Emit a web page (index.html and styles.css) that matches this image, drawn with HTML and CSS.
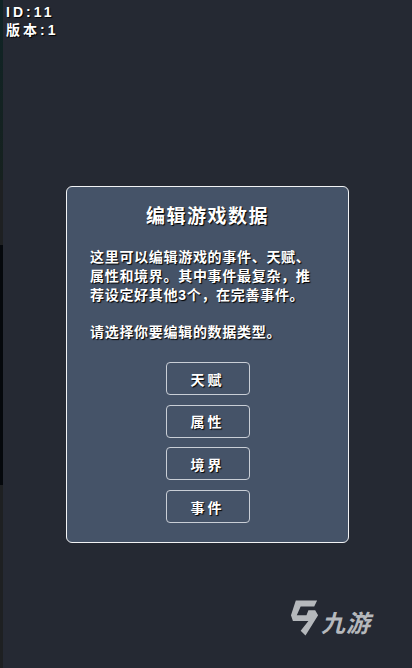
FILE: index.html
```html
<!DOCTYPE html>
<html lang="zh">
<head>
    <meta charset="UTF-8">
    <meta name="viewport" content="width=device-width, initial-scale=1.0">
    <title>编辑游戏数据</title>
    <link rel="stylesheet" href="styles.css">
</head>
<body>

<div class="screen">
    <div class="edgeStrip"></div>
    <div class="versionInfo">
        <div>ID:11</div>
        <div>版本:1</div>
    </div>

    <div class="dialog">
        <div class="dialogTitle">编辑游戏数据</div>
        <p class="dialogText">这里可以编辑游戏的事件、天赋、<br>属性和境界。其中事件最复杂，推<br>荐设定好其他3个，在完善事件。</p>
        <p class="dialogText dialogPrompt">请选择你要编辑的数据类型。</p>
        <div class="buttonList">
            <button class="dataBtn">天赋</button>
            <button class="dataBtn">属性</button>
            <button class="dataBtn">境界</button>
            <button class="dataBtn">事件</button>
        </div>
    </div>

    <div class="watermark">
        <svg class="watermarkIcon" viewBox="0 0 32 40" width="31" height="40">
            <path d="M6 1 L28 1 L25 7 L11 7 L7 16 L17 16 L19 11 L26 11 L29 16 L16 37 L11 32 L19 22 L3 22 L1 16 Z" fill="#b5b8bc"/>
        </svg>
        <span class="watermarkText">九游</span>
    </div>
</div>

</body>
</html>
```

FILE: styles.css
```css
html, body {
    margin: 0;
    height: 100%;
}
body {
    background: #252933;
    font-family: "Liberation Sans", "Noto Sans CJK SC", sans-serif;
    color: white;
}
.screen {
    position: relative;
    height: 668px;
    overflow: hidden;
    display: flex;
    align-items: flex-start;
}
.edgeStrip {
    position: absolute;
    top: 0;
    left: 0;
    width: 3px;
    height: 100%;
    background: linear-gradient(#0f2426 0, #16211f 180px, #1e2022 180px, #1e2022 245px, #05080c 245px, #05080c 485px, #1e2022 485px);
}
.versionInfo {
    position: absolute;
    top: 4px;
    left: 6px;
    font-size: 14px;
    font-weight: bold;
    line-height: 17.5px;
    letter-spacing: 3px;
    text-shadow: 1px 1px 1px #000;
}
.dialog {
    box-sizing: border-box;
    width: 283px;
    height: 357px;
    margin: 186px 0 0 66px;
    padding: 18px 23px 0;
    background: #455368;
    border: 1px solid #f2f3f5;
    border-radius: 6px;
}
.dialogTitle {
    font-size: 19px;
    font-weight: bold;
    line-height: 24px;
    letter-spacing: 1.5px;
    text-align: center;
    text-shadow: 1px 1px 1px #000;
}
.dialogText {
    margin: 19px 0 0;
    font-size: 14px;
    line-height: 19px;
    font-weight: bold;
    letter-spacing: 0.7px;
    white-space: nowrap;
    text-shadow: 1px 1px 1px #000;
}
.dialogPrompt {
    margin-top: 18px;
}
.buttonList {
    display: flex;
    flex-direction: column;
    align-items: center;
    gap: 9.7px;
    margin-top: 20px;
}
.dataBtn {
    box-sizing: border-box;
    width: 84px;
    height: 33px;
    padding: 0;
    background: transparent;
    border: 1px solid #c9ced6;
    border-radius: 4px;
    color: white;
    font-family: inherit;
    font-size: 14px;
    font-weight: bold;
    letter-spacing: 3px;
    text-shadow: 1px 1px 1px #000;
}
.watermark {
    position: absolute;
    top: 598px;
    left: 290px;
    display: flex;
    align-items: center;
    color: #b5b8bc;
}
.watermarkIcon {
    display: block;
}
.watermarkText {
    font-size: 24px;
    font-weight: bold;
    font-style: italic;
    letter-spacing: 1px;
    margin-top: 6px;
}
```
